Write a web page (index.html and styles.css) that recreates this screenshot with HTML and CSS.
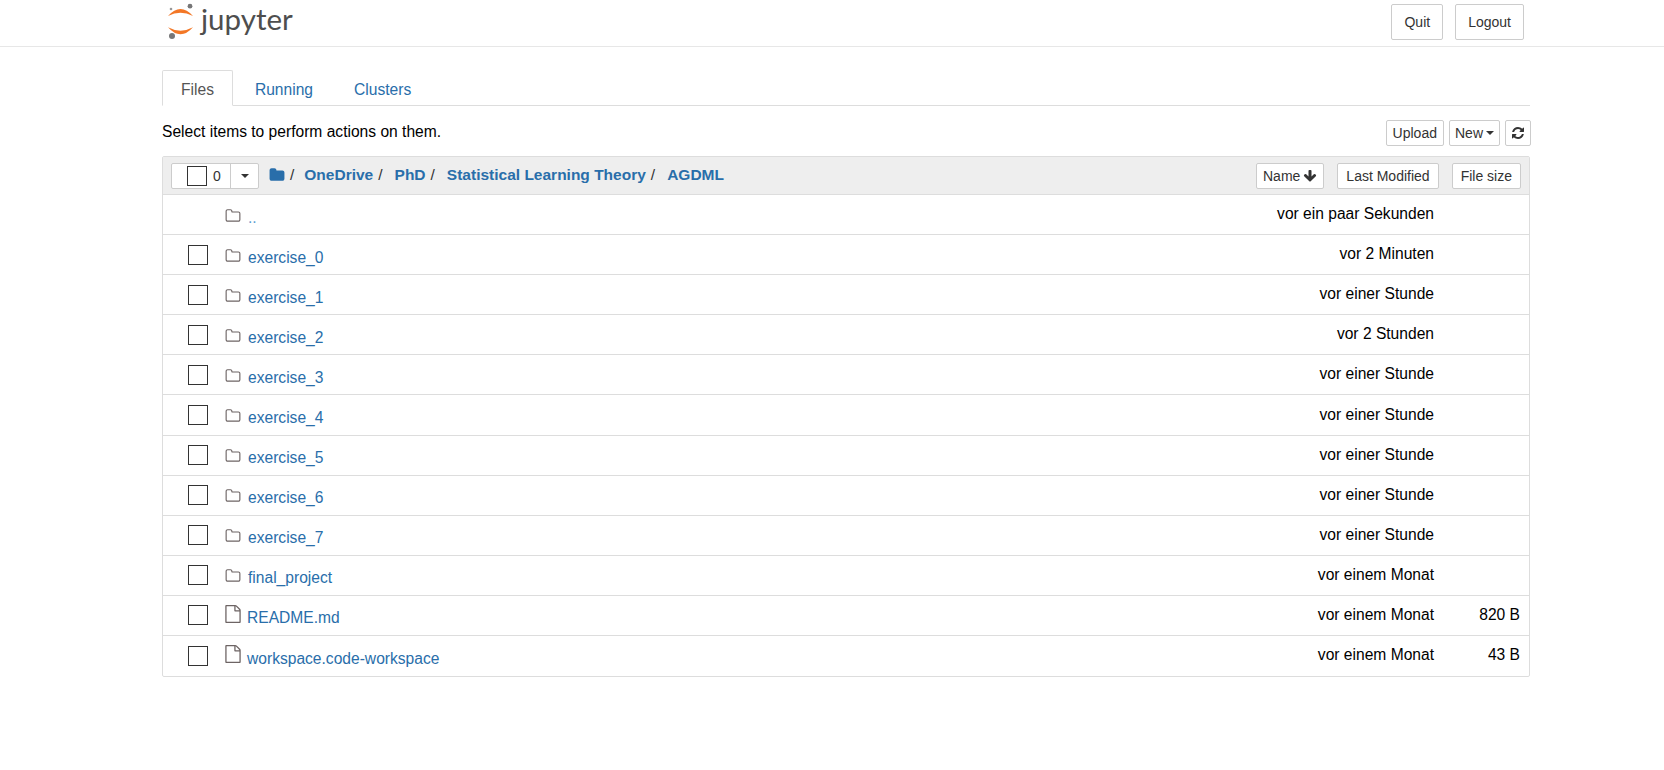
FILE: index.html
```html
<!DOCTYPE html>
<html lang="en">
<head>
    <meta charset="UTF-8">
    <title>Home</title>
    <link rel="stylesheet" href="styles.css">
</head>
<body>
    <svg class="icon-defs" width="0" height="0">
        <symbol id="i-folder" viewBox="0 0 1792 1792"><path d="M1728 608v704q0 92-66 158t-158 66h-1216q-92 0-158-66t-66-158v-960q0-92 66-158t158-66h320q92 0 158 66t66 158v32h672q92 0 158 66t66 158z"/></symbol>
        <symbol id="i-folder-o" viewBox="0 0 1792 1792"><path d="M1600 1312v-704q0-40-28-68t-68-28h-704q-40 0-68-28t-28-68v-64q0-40-28-68t-68-28h-320q-40 0-68 28t-28 68v960q0 40 28 68t68 28h1216q40 0 68-28t28-68zm128-704v704q0 92-66 158t-158 66h-1216q-92 0-158-66t-66-158v-960q0-92 66-158t158-66h320q92 0 158 66t66 158v32h672q92 0 158 66t66 158z"/></symbol>
        <symbol id="i-file-o" viewBox="0 0 1792 1792"><path d="M1596 380q28 28 48 76t20 88v1152q0 40-28 68t-68 28h-1344q-40 0-68-28t-28-68v-1600q0-40 28-68t68-28h896q40 0 88 20t76 48zm-444-244v376h376q-10-29-22-41l-313-313q-12-12-41-22zm384 1528v-1024h-416q-40 0-68-28t-28-68v-416h-768v1536h1280z"/></symbol>
        <symbol id="i-down" viewBox="0 0 1792 1792"><path d="M1675 832q0 53-37 90l-651 652q-39 37-91 37-53 0-90-37l-651-652q-38-36-38-90 0-53 38-91l74-75q39-37 91-37 53 0 90 37l294 294v-704q0-52 38-90t90-38h128q52 0 90 38t38 90v704l294-294q37-37 90-37 52 0 91 37l75 75q37 39 37 91z"/></symbol>
        <symbol id="i-refresh" viewBox="0 0 1792 1792"><path d="M1639 1056q0 5-1 7-64 268-268 434.5t-478 166.5q-146 0-282.5-55t-243.5-157l-129 129q-19 19-45 19t-45-19-19-45v-448q0-26 19-45t45-19h448q26 0 45 19t19 45-19 45l-137 137q71 66 161 102t187 36q134 0 250-65t186-179q11-17 53-117 8-23 30-23h192q13 0 22.5 9.5t9.5 22.5zm25-800v448q0 26-19 45t-45 19h-448q-26 0-45-19t-19-45 19-45l138-138q-148-137-349-137-134 0-250 65t-186 179q-11 17-53 117-8 23-30 23h-199q-13 0-22.5-9.5t-9.5-22.5v-7q65-268 270-434.5t480-166.5q146 0 284 55.5t245 156.5l130-129q19-19 45-19t45 19 19 45z"/></symbol>
    </svg>

    <header class="site-header">
        <div class="header-inner">
            <a class="logo" href="#">
                <svg class="logo-mark" width="28" height="37" viewBox="0 0 28 37">
                    <path d="M1 13Q13.5 -1 26 13Q13.5 6.4 1 13Z" fill="#f37726"/>
                    <path d="M1 24.3Q13.5 38.3 26 24.3Q13.5 31.1 1 24.3Z" fill="#f37726"/>
                    <circle cx="23" cy="3.2" r="2.4" fill="#767677"/>
                    <circle cx="4" cy="6" r="1.3" fill="#989798"/>
                    <circle cx="5" cy="33" r="3" fill="#767677"/>
                </svg>
                <span class="logo-text">jupyter</span>
            </a>
            <div class="header-buttons">
                <button class="btn btn-top">Quit</button>
                <button class="btn btn-top">Logout</button>
            </div>
        </div>
    </header>

    <main class="container">
        <ul class="tabs">
            <li class="tab active">Files</li>
            <li class="tab">Running</li>
            <li class="tab">Clusters</li>
        </ul>

        <div class="toolbar">
            <span class="toolbar-text">Select items to perform actions on them.</span>
            <div class="toolbar-buttons">
                <button class="btn">Upload</button>
                <button class="btn btn-new">New <span class="caret"></span></button>
                <button class="btn btn-refresh"><svg width="14" height="14"><use href="#i-refresh"/></svg></button>
            </div>
        </div>

        <div class="file-list">
            <div class="list-header">
                <div class="select-group">
                    <div class="select-main"><span class="check"></span><span class="count">0</span></div>
                    <div class="select-drop"><span class="caret"></span></div>
                </div>
                <div class="breadcrumb">
                    <svg class="crumb-folder" width="16" height="16"><use href="#i-folder"/></svg>
                    <span class="sep">/</span>
                    <a class="crumb-first" href="#">OneDrive</a><span class="sep">/</span>
                    <a href="#">PhD</a><span class="sep">/</span>
                    <a href="#">Statistical Learning Theory</a><span class="sep">/</span>
                    <a href="#">AGDML</a>
                </div>
                <div class="sort-buttons">
                    <button class="btn btn-name">Name <svg width="14" height="14"><use href="#i-down"/></svg></button>
                    <button class="btn">Last Modified</button>
                    <button class="btn">File size</button>
                </div>
            </div>

            <div class="row">
                <span class="check-slot"></span>
                <svg class="item-icon"><use href="#i-folder-o"/></svg>
                <a class="name up" href="#">..</a>
                <span class="time">vor ein paar Sekunden</span>
                <span class="size"></span>
            </div>
            <div class="row">
                <span class="check-slot"><span class="check"></span></span>
                <svg class="item-icon"><use href="#i-folder-o"/></svg>
                <a class="name" href="#">exercise_0</a>
                <span class="time">vor 2 Minuten</span>
                <span class="size"></span>
            </div>
            <div class="row">
                <span class="check-slot"><span class="check"></span></span>
                <svg class="item-icon"><use href="#i-folder-o"/></svg>
                <a class="name" href="#">exercise_1</a>
                <span class="time">vor einer Stunde</span>
                <span class="size"></span>
            </div>
            <div class="row">
                <span class="check-slot"><span class="check"></span></span>
                <svg class="item-icon"><use href="#i-folder-o"/></svg>
                <a class="name" href="#">exercise_2</a>
                <span class="time">vor 2 Stunden</span>
                <span class="size"></span>
            </div>
            <div class="row">
                <span class="check-slot"><span class="check"></span></span>
                <svg class="item-icon"><use href="#i-folder-o"/></svg>
                <a class="name" href="#">exercise_3</a>
                <span class="time">vor einer Stunde</span>
                <span class="size"></span>
            </div>
            <div class="row">
                <span class="check-slot"><span class="check"></span></span>
                <svg class="item-icon"><use href="#i-folder-o"/></svg>
                <a class="name" href="#">exercise_4</a>
                <span class="time">vor einer Stunde</span>
                <span class="size"></span>
            </div>
            <div class="row">
                <span class="check-slot"><span class="check"></span></span>
                <svg class="item-icon"><use href="#i-folder-o"/></svg>
                <a class="name" href="#">exercise_5</a>
                <span class="time">vor einer Stunde</span>
                <span class="size"></span>
            </div>
            <div class="row">
                <span class="check-slot"><span class="check"></span></span>
                <svg class="item-icon"><use href="#i-folder-o"/></svg>
                <a class="name" href="#">exercise_6</a>
                <span class="time">vor einer Stunde</span>
                <span class="size"></span>
            </div>
            <div class="row">
                <span class="check-slot"><span class="check"></span></span>
                <svg class="item-icon"><use href="#i-folder-o"/></svg>
                <a class="name" href="#">exercise_7</a>
                <span class="time">vor einer Stunde</span>
                <span class="size"></span>
            </div>
            <div class="row">
                <span class="check-slot"><span class="check"></span></span>
                <svg class="item-icon"><use href="#i-folder-o"/></svg>
                <a class="name" href="#">final_project</a>
                <span class="time">vor einem Monat</span>
                <span class="size"></span>
            </div>
            <div class="row">
                <span class="check-slot"><span class="check"></span></span>
                <svg class="item-icon file"><use href="#i-file-o"/></svg>
                <a class="name file-name" href="#">README.md</a>
                <span class="time">vor einem Monat</span>
                <span class="size">820 B</span>
            </div>
            <div class="row">
                <span class="check-slot"><span class="check"></span></span>
                <svg class="item-icon file"><use href="#i-file-o"/></svg>
                <a class="name file-name" href="#">workspace.code-workspace</a>
                <span class="time">vor einem Monat</span>
                <span class="size">43 B</span>
            </div>
        </div>
    </main>
</body>
</html>
```

FILE: styles.css
```css
* {
    box-sizing: border-box;
}
body {
    margin: 0;
    font-family: "Liberation Sans", Arial, sans-serif;
    font-size: 15.6px;
    color: #000;
    background: #fff;
}
a {
    color: #296eaa;
    text-decoration: none;
}
svg {
    fill: currentColor;
}
.icon-defs {
    position: absolute;
}

.site-header {
    height: 47px;
    border-bottom: 1px solid #e7e7e7;
}
.header-inner {
    width: 1368px;
    margin-left: 162px;
    display: flex;
    justify-content: space-between;
}
.logo {
    display: flex;
    align-items: flex-start;
    margin-left: 5px;
    height: 46px;
}
.logo-mark {
    margin-top: 3px;
}
.logo-text {
    font-family: Lato, sans-serif;
    font-size: 29.5px;
    line-height: 38px;
    color: #4e4e4e;
    margin-left: 6px;
}
.header-buttons {
    display: flex;
    gap: 12px;
    padding-top: 4px;
    padding-right: 6px;
}

.btn {
    font-family: inherit;
    font-size: 14px;
    color: #333;
    background: #fff;
    border: 1px solid #ccc;
    border-radius: 2px;
    padding: 0 6px;
    height: 26px;
    display: inline-flex;
    align-items: center;
    gap: 4px;
    white-space: nowrap;
}
.btn-top {
    height: 36px;
    padding: 0 12px;
}
.btn-refresh {
    padding: 0 5px;
}
.btn-new {
    padding: 0 5px;
    gap: 3px;
}
.caret {
    display: inline-block;
    width: 0;
    height: 0;
    border-top: 4px solid #333;
    border-left: 4px solid transparent;
    border-right: 4px solid transparent;
}

.container {
    width: 1368px;
    margin-left: 162px;
}
.tabs {
    list-style: none;
    margin: 23px 0 0;
    padding: 0;
    display: flex;
    gap: 3px;
    height: 36px;
    border-bottom: 1px solid #ddd;
}
.tab {
    height: 36px;
    padding: 0 18px;
    line-height: 37px;
    color: #296eaa;
    border: 1px solid transparent;
    border-radius: 2px 2px 0 0;
}
.tab.active {
    color: #555;
    background: #fff;
    border-color: #ddd #ddd #fff;
}

.toolbar {
    display: flex;
    justify-content: space-between;
    align-items: center;
    height: 26px;
    margin-top: 14px;
    margin-right: -1px;
    line-height: 22px;
}
.toolbar-text {
    margin-top: -2px;
}
.toolbar-buttons {
    display: flex;
    gap: 5px;
}

.file-list {
    margin-top: 10px;
    border: 1px solid #ddd;
    border-radius: 2px;
}
.list-header {
    display: flex;
    align-items: center;
    height: 38px;
    padding: 0 8px;
    background: #eee;
    border-bottom: 1px solid #ddd;
}
.select-group {
    display: flex;
    height: 26px;
    background: #fff;
    border: 1px solid #ccc;
    border-radius: 2px;
}
.select-main {
    display: flex;
    align-items: center;
    width: 59px;
    padding-left: 15px;
    border-right: 1px solid #ccc;
}
.select-drop {
    width: 27px;
    display: flex;
    align-items: center;
    justify-content: center;
}
.check {
    display: block;
    width: 20px;
    height: 20px;
    background: #fff;
    border: 1px solid #333;
}
.count {
    font-size: 14px;
    color: #333;
    margin-left: 6px;
}
.breadcrumb {
    display: flex;
    align-items: center;
    margin-left: 10px;
    margin-top: -2px;
    font-weight: bold;
    font-size: 15.5px;
    color: #296eaa;
}
.breadcrumb a {
    margin-left: 12px;
}
.breadcrumb .crumb-first {
    margin-left: 10px;
}
.sep {
    font-weight: normal;
    color: #333;
    margin-left: 5px;
}
.sort-buttons {
    display: flex;
    gap: 13px;
    margin-left: auto;
}
.sort-buttons .btn {
    padding: 0 8px;
}
.sort-buttons .btn-name {
    padding: 0 6px;
    gap: 3px;
}

.row {
    display: flex;
    align-items: center;
    height: 40.1px;
    border-bottom: 1px solid #ddd;
}
.row:last-child {
    height: 39.5px;
    border-bottom: none;
}
.check-slot {
    width: 25px;
    margin-left: 25px;
}
.item-icon {
    width: 16px;
    height: 16px;
    margin-left: 12px;
    margin-top: 2px;
    color: #6d6464;
}
.item-icon.file {
    width: 18px;
    height: 18px;
    margin-left: 11px;
    margin-top: -3px;
}
.name {
    margin-left: 7px;
    margin-top: 6px;
}
.file-name {
    margin-left: 5px;
}
.time {
    margin-left: auto;
    margin-top: -1px;
}
.size {
    width: 95px;
    padding-right: 9px;
    margin-top: -1px;
    text-align: right;
}
.name.up {
    color: #5e9dd1;
}
```
